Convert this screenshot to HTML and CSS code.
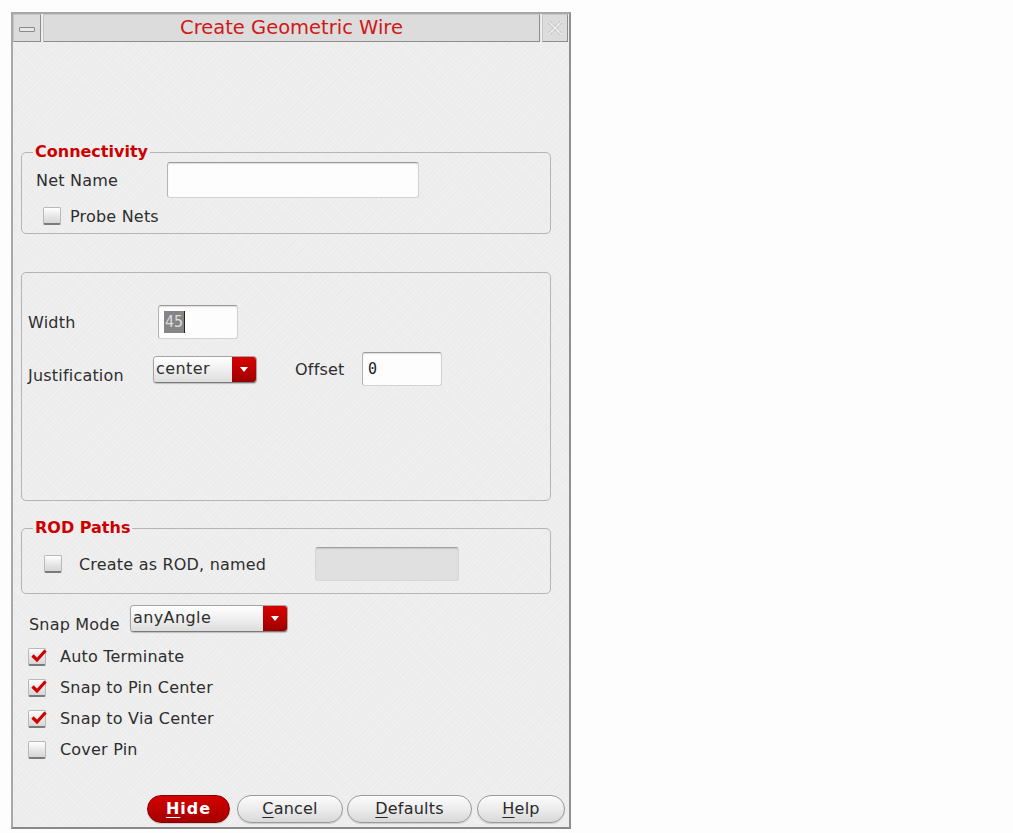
FILE: index.html
```html
<!DOCTYPE html>
<html>
<head>
<meta charset="utf-8">
<link rel="stylesheet" href="styles.css">
</head>
<body>
<div class="window">
  <div class="titlebar">
    <div class="tb-btn tb-min"><span class="min-bar"></span></div>
    <div class="tb-title">Create Geometric Wire</div>
    <div class="tb-btn tb-close">
      <svg width="18" height="18" viewBox="0 0 18 18"><path d="M3 3 L15 15 M15 3 L3 15" stroke="#c4c4c4" stroke-width="3.5" fill="none" stroke-dasharray="3 1.5"/><path d="M3 3 L15 15 M15 3 L3 15" stroke="#f2f2f2" stroke-width="1.2" fill="none"/></svg>
    </div>
  </div>
  <div class="content">
    <fieldset class="group conn">
      <legend>Connectivity</legend>
      <div class="row net-row">
        <span class="lbl net-lbl">Net Name</span>
        <div class="input net-input"></div>
      </div>
      <div class="chk-row probe">
        <span class="cb"></span><span class="chk-text">Probe Nets</span>
      </div>
    </fieldset>

    <div class="group plain">
      <div class="row width-row">
        <span class="lbl width-lbl">Width</span>
        <div class="input width-input"><span class="sel">45</span><span class="caret"></span></div>
      </div>
      <div class="row just-row">
        <span class="lbl just-lbl">Justification</span>
        <div class="dd just-dd"><span class="dd-text">center</span><span class="dd-arrow"><span class="tri"></span></span></div>
        <span class="lbl offset-lbl">Offset</span>
        <div class="input offset-input">0</div>
      </div>
    </div>

    <fieldset class="group rod">
      <legend>ROD Paths</legend>
      <div class="row rod-row">
        <span class="cb"></span><span class="chk-text rod-text">Create as ROD, named</span>
        <div class="input disabled-input"></div>
      </div>
    </fieldset>

    <div class="row snap-row">
      <span class="lbl snap-lbl">Snap Mode</span>
      <div class="dd snap-dd"><span class="dd-text">anyAngle</span><span class="dd-arrow"><span class="tri"></span></span></div>
    </div>

    <div class="checks">
      <div class="chk-row"><span class="cb checked"><svg width="18" height="16" viewBox="0 0 18 16"><path d="M2.5 7.5 L7 12 L15.5 2.5" stroke="#d00000" stroke-width="3.2" fill="none" stroke-linejoin="miter"/></svg></span><span class="chk-text">Auto Terminate</span></div>
      <div class="chk-row"><span class="cb checked"><svg width="18" height="16" viewBox="0 0 18 16"><path d="M2.5 7.5 L7 12 L15.5 2.5" stroke="#d00000" stroke-width="3.2" fill="none" stroke-linejoin="miter"/></svg></span><span class="chk-text">Snap to Pin Center</span></div>
      <div class="chk-row"><span class="cb checked"><svg width="18" height="16" viewBox="0 0 18 16"><path d="M2.5 7.5 L7 12 L15.5 2.5" stroke="#d00000" stroke-width="3.2" fill="none" stroke-linejoin="miter"/></svg></span><span class="chk-text">Snap to Via Center</span></div>
      <div class="chk-row"><span class="cb"></span><span class="chk-text">Cover Pin</span></div>
    </div>
  </div>
  <div class="buttons">
    <div class="btn btn-hide"><u>H</u>ide</div>
    <div class="btn btn-cancel"><u>C</u>ancel</div>
    <div class="btn btn-defaults"><u>D</u>efaults</div>
    <div class="btn btn-help"><u>H</u>elp</div>
  </div>
</div>
</body>
</html>
```
FILE: styles.css
```css
html, body {
  margin: 0;
  padding: 0;
  background: #fdfdfd;
}
body {
  font-family: "DejaVu Sans", "Noto Sans", sans-serif;
  font-size: 16px;
  letter-spacing: 0.2px;
  color: #2e2e2e;
}
.window {
  margin: 12px 0 0 11px;
  width: 560px;
  height: 817px;
  box-sizing: border-box;
  border: 2px solid #a8a8a8;
  border-right-color: #909090;
  border-bottom-color: #8a8a8a;
  background-color: #ededed;
  background-image:
    repeating-linear-gradient(45deg, rgba(255,255,255,0.18) 0 1px, transparent 1px 3px),
    repeating-linear-gradient(-45deg, rgba(0,0,0,0.012) 0 1px, transparent 1px 4px);
  display: flex;
  flex-direction: column;
}
.titlebar {
  display: flex;
  height: 28px;
  gap: 2px;
  flex: none;
}
.tb-btn {
  box-sizing: border-box;
  height: 28px;
  border: 1px solid #c6c6c6;
  border-right-color: #8c8c8c;
  border-bottom-color: #8c8c8c;
  background: #dcdcdc;
  display: flex;
  align-items: center;
  justify-content: center;
}
.tb-min { width: 28px; }
.tb-close { width: 26px; }
.min-bar {
  width: 14px;
  height: 3px;
  border: 1px solid #8a8a8a;
  border-radius: 1px;
  background: #e6e6e6;
  margin-top: 2px;
}
.tb-title {
  width: 497px;
  box-sizing: border-box;
  height: 28px;
  border: 1px solid #c6c6c6;
  border-right-color: #8c8c8c;
  border-bottom-color: #8c8c8c;
  background: #dcdcdc;
  color: #d01818;
  font-size: 19.5px;
  letter-spacing: 0;
  line-height: 26px;
  text-align: center;
}
.content {
  padding: 101px 0 0 8px;
}
.group {
  width: 530px;
  box-sizing: border-box;
  margin: 0;
  border: 1px solid #b4b4b4;
  border-radius: 5px;
  min-inline-size: 0;
}
.group legend {
  font-weight: bold;
  color: #cc0000;
  line-height: 18px;
  padding: 0 2px;
  margin-left: -3px;
  letter-spacing: 0;
}
.conn {
  padding: 1px 0 8px 14px;
}
.row {
  display: flex;
  align-items: center;
}
.lbl { white-space: nowrap; }
.net-row { height: 36px; }
.net-lbl { width: 131px; }
.input {
  box-sizing: border-box;
  background: #fdfdfd;
  border: 1px solid #d2d2d2;
  border-top-color: #9a9a9a;
  border-left-color: #b4b4b4;
  border-radius: 3px;
  box-shadow: inset 0 1px 1px rgba(0, 0, 0, 0.12);
  font-family: "DejaVu Sans Mono", monospace;
  font-size: 15px;
  letter-spacing: 0;
  color: #222;
}
.net-input { width: 252px; height: 36px; }

.chk-row {
  display: flex;
  align-items: center;
}
.probe {
  height: 18px;
  margin: 9px 0 0 7px;
}
.cb {
  width: 18px;
  height: 18px;
  box-sizing: border-box;
  border: 1px solid #b8b8b8;
  border-bottom: 2px solid #7a7a7a;
  border-radius: 2px;
  background: linear-gradient(#ffffff, #e4e4e4 60%, #d6d6d6);
  position: relative;
  flex: none;
}
.cb svg {
  position: absolute;
  left: 1px;
  top: -1px;
}
.chk-text { margin-left: 9px; }

.plain {
  margin-top: 38px;
  height: 229px;
  padding: 32px 0 0 6px;
}
.width-row { height: 34px; }
.width-lbl { width: 130px; }
.width-input {
  width: 80px;
  height: 34px;
  padding-left: 5px;
  display: flex;
  align-items: center;
}
.sel {
  background: #858585;
  color: #dcdcdc;
  line-height: 22px;
  padding: 0 1px;
}
.caret {
  width: 1px;
  height: 22px;
  background: #222;
}
.just-row {
  height: 34px;
  margin-top: 13px;
}
.just-lbl {
  width: 125px;
  margin-top: 12px;
}
.dd {
  display: flex;
  height: 27px;
  box-sizing: border-box;
  border: 1px solid #a4a4a4;
  border-bottom-color: #7a7a7a;
  border-radius: 4px;
  overflow: hidden;
  box-shadow: 0 1px 1px rgba(0, 0, 0, 0.2);
}
.dd-text {
  flex: 1;
  background: linear-gradient(#ffffff, #eeeeee 55%, #dddddd);
  padding-left: 2px;
  line-height: 23px;
  letter-spacing: 0.4px;
}
.dd-arrow {
  width: 24px;
  background: linear-gradient(#d80000, #b80000 60%, #980000);
  display: flex;
  align-items: center;
  justify-content: center;
}
.tri {
  width: 0;
  height: 0;
  border-left: 4px solid transparent;
  border-right: 4px solid transparent;
  border-top: 5px solid #ffffff;
}
.just-dd { width: 104px; }
.offset-lbl {
  margin-left: 38px;
  width: 67px;
}
.offset-input {
  width: 80px;
  height: 34px;
  padding-left: 5px;
  line-height: 32px;
}

.rod {
  margin-top: 18px;
  padding: 10px 0 12px 14px;
}
.rod-row {
  height: 34px;
  margin-left: 8px;
}
.rod-text {
  margin-left: 17px;
  width: 236px;
}
.disabled-input {
  width: 144px;
  height: 34px;
  background: #e0e0e0;
  border-color: #d6d6d6;
  border-top-color: #a0a0a0;
}

.snap-row {
  height: 27px;
  margin: 11px 0 0 8px;
}
.snap-lbl {
  width: 101px;
  margin-top: 12px;
}
.snap-dd { width: 158px; }

.checks {
  margin: 9px 0 0 7px;
}
.checks .chk-row {
  height: 31px;
}
.checks .chk-text { margin-left: 14px; }

.buttons {
  margin-top: auto;
  display: flex;
  justify-content: flex-end;
  padding: 0 4px 4px 0;
  gap: 0;
}
.btn {
  height: 28px;
  box-sizing: border-box;
  border: 1px solid #9a9a9a;
  border-radius: 14px;
  background: linear-gradient(#fcfcfc, #ececec 50%, #d8d8d8);
  box-shadow: 0 1px 1px rgba(0, 0, 0, 0.15);
  text-align: center;
  line-height: 26px;
  color: #2a2a2a;
}
.btn u { text-underline-offset: 3px; }
.btn-hide {
  width: 83px;
  background: linear-gradient(#d40000, #bb0000 55%, #a40000);
  border-color: #8a0000;
  color: #ffffff;
  font-weight: bold;
  letter-spacing: 1px;
}
.btn-cancel { width: 106px; margin-left: 7px; }
.btn-defaults { width: 125px; margin-left: 4px; }
.btn-help { width: 88px; margin-left: 5px; }
```
